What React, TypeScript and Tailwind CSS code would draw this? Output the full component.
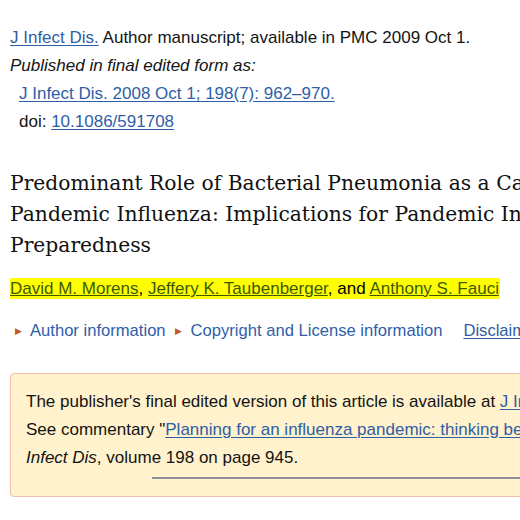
import React from 'react';

const link = 'text-[#2f5ea8] underline decoration-[#2f5ea8] underline-offset-2';

export default function App() {
  return (
    <div className="w-[520px] h-[520px] overflow-hidden bg-white font-['Liberation_Sans',Arial,sans-serif] text-[17px] text-[#141414]">
      <div className="w-[900px] pt-[24px]">
        <div className="px-[10px] leading-[28px]">
          <div>
            <a className={link}>J Infect Dis.</a> Author manuscript; available in PMC 2009 Oct 1.
          </div>
          <div className="italic">Published in final edited form as:</div>
          <div className="pl-[9px]">
            <a className={link}>J Infect Dis. 2008 Oct 1; 198(7): 962–970.</a>
          </div>
          <div className="pl-[9px]">
            doi: <a className={link}>10.1086/591708</a>
          </div>
        </div>

        <h1 className="px-[10px] mt-[32px] font-['DejaVu_Serif',serif] text-[20.3px] leading-[31px] text-[#111] whitespace-nowrap">
          Predominant Role of Bacterial Pneumonia as a Cause of Death in
          <br />
          Pandemic Influenza: Implications for Pandemic Influenza
          <br />
          Preparedness
        </h1>

        <div className="mx-[10px] mt-[17px] w-[490px] bg-[#ffff00] leading-[21px] whitespace-nowrap text-black">
          <a className="text-[#3d5a00] underline">David M. Morens</a>,{' '}
          <a className="text-[#3d5a00] underline">Jeffery K. Taubenberger</a>, and{' '}
          <a className="text-[#3d5a00] underline">Anthony S. Fauci</a>
        </div>

        <div className="flex items-center mt-[21px] pl-[15px] whitespace-nowrap text-[16.6px] text-[#2f5ea8] leading-[22px]">
          <span className="text-[#c0592d] text-[9px] mr-[8px]">▶</span>
          <span>Author information</span>
          <span className="text-[#c0592d] text-[9px] ml-[9px] mr-[9px]">▶</span>
          <span>Copyright and License information</span>
          <a className={`${link} ml-[21px]`}>Disclaimer</a>
        </div>

        <div className="mt-[31px] ml-[10px] w-[860px] rounded-[4px] border border-[#eec1ad] bg-[#fff2cc] px-[15px] pt-[14px] pb-[17px] leading-[28px] whitespace-nowrap">
          <div>
            The publisher's final edited version of this article is available at <a className={link}>J Infect Dis</a>
          </div>
          <div>
            See commentary "<a className={link}>Planning for an influenza pandemic: thinking beyond the virus</a>" on page 940, and
          </div>
          <div>
            <i>Infect Dis</i>, volume 198 on page 945.
          </div>
          <div className="ml-[126px] mt-[5px] h-[2px] bg-[#8f8f9a]" />
        </div>
      </div>
    </div>
  );
}
